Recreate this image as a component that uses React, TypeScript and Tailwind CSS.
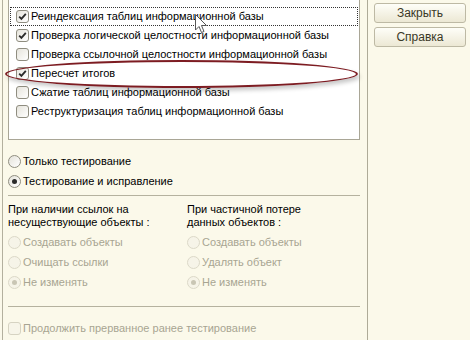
import React from 'react'

const ff = { fontFamily: '"Liberation Sans", Arial, sans-serif' }

function CheckBox({ checked, disabled }: { checked?: boolean; disabled?: boolean }) {
  return (
    <span
      className={`flex h-[13px] w-[13px] shrink-0 items-center justify-center rounded-[3px] border ${
        disabled
          ? 'border-[#d6d3c2] bg-[#f7f5e9]'
          : 'border-[#8f8d80] bg-gradient-to-br from-[#e6e4dc] to-white'
      }`}
    >
      {checked && (
        <svg width="9" height="9" viewBox="0 0 9 9">
          <path d="M1.2 4.6 L3.4 6.9 L7.8 1.8" fill="none" stroke="#2a2a2a" strokeWidth="1.8" />
        </svg>
      )}
    </span>
  )
}

function Radio({ checked, disabled }: { checked?: boolean; disabled?: boolean }) {
  return (
    <span
      className={`flex h-[13px] w-[13px] shrink-0 items-center justify-center rounded-full border ${
        disabled
          ? 'border-[#dcd9c8] bg-[#f6f4e8]'
          : 'border-[#8f8d80] bg-gradient-to-br from-[#e4e2da] to-white'
      }`}
    >
      {checked && (
        <span className={`h-[5px] w-[5px] rounded-full ${disabled ? 'bg-[#c9c6b4]' : 'bg-[#2a2a2a]'}`} />
      )}
    </span>
  )
}

const checks = [
  { label: 'Реиндексация таблиц информационной базы', checked: true, focus: true },
  { label: 'Проверка логической целостности информационной базы', checked: true },
  { label: 'Проверка ссылочной целостности информационной базы', checked: false },
  { label: 'Пересчет итогов', checked: true },
  { label: 'Сжатие таблиц информационной базы', checked: false },
  { label: 'Реструктуризация таблиц информационной базы', checked: false },
]

function RadioRow({ label, checked, disabled }: { label: string; checked?: boolean; disabled?: boolean }) {
  return (
    <div className="flex h-[20px] items-center gap-[2px]">
      <Radio checked={checked} disabled={disabled} />
      <span className={disabled ? 'text-[#a8a592]' : 'text-black'}>{label}</span>
    </div>
  )
}

export default function App() {
  return (
    <div
      className="relative flex h-[340px] w-[470px] overflow-hidden bg-[#fbf9ea] text-[11px] leading-[13px]"
      style={ff}
    >
      <div className="ml-[2px] flex w-[365px] flex-col border-l border-[#b3b09e] pl-[5px]">
        <div className="-mt-[3px] h-[143px] w-[352px] border border-[#a9a696] bg-white pt-[9px]">
          {checks.map((c) => (
            <div
              key={c.label}
              className={`mx-[1px] flex h-[19px] items-center gap-[2px] pl-[5px] ${
                c.focus ? 'border border-dotted border-[#333]' : 'border border-transparent'
              }`}
            >
              <CheckBox checked={c.checked} />
              <span className="whitespace-nowrap text-black">{c.label}</span>
            </div>
          ))}
        </div>

        <div className="mt-[11px]">
          <RadioRow label="Только тестирование" />
          <RadioRow label="Тестирование и исправление" checked />
        </div>

        <div className="mt-[4px] h-px w-[352px] bg-[#b5b29f]" />

        <div className="mt-[7px] flex">
          <div className="w-[179px]">
            <div className="text-black">При наличии ссылок на</div>
            <div className="text-black">несуществующие объекты :</div>
            <div className="mt-[3px]">
              <RadioRow label="Создавать объекты" disabled />
              <RadioRow label="Очищать ссылки" disabled />
              <RadioRow label="Не изменять" checked disabled />
            </div>
          </div>
          <div>
            <div className="text-black">При частичной потере</div>
            <div className="text-black">данных объектов :</div>
            <div className="mt-[3px]">
              <RadioRow label="Создавать объекты" disabled />
              <RadioRow label="Удалять объект" disabled />
              <RadioRow label="Не изменять" checked disabled />
            </div>
          </div>
        </div>

        <div className="mt-[14px] h-px w-[352px] bg-[#b5b29f]" />

        <div className="mt-[11px] flex h-[20px] items-center gap-[2px]">
          <CheckBox disabled />
          <span className="text-[#a8a592]">Продолжить прерванное ранее тестирование</span>
        </div>
      </div>

      <div className="h-full w-px bg-[#aeab98]" />

      <div className="flex flex-col gap-[4px] pl-[6px] pt-[3px]">
        {['Закрыть', 'Справка'].map((b) => (
          <button
            key={b}
            className="flex h-[20px] w-[92px] items-center justify-center rounded-[3px] border border-[#bdb9a4] bg-gradient-to-b from-[#fefef8] to-[#ece8d4] text-[12px] text-[#3a3826]"
          >
            {b}
          </button>
        ))}
      </div>

      {/* highlight ellipse */}
      <div className="pointer-events-none absolute left-[5px] top-[60px] h-[28px] w-[353px] rounded-[50%] border-2 border-[#7d1c22] shadow-[2px_3px_4px_rgba(0,0,0,0.22)]" />

      {/* mouse cursor */}
      <svg className="pointer-events-none absolute left-[195px] top-[14px]" width="13" height="20" viewBox="0 0 13 20">
        <path
          d="M0.5 0.5 L0.5 16 L4 12.5 L6.5 18.5 L9 17.5 L6.5 11.5 L11.5 11.5 Z"
          fill="#fff"
          stroke="#555"
          strokeWidth="1"
          strokeLinejoin="round"
        />
      </svg>
    </div>
  )
}
